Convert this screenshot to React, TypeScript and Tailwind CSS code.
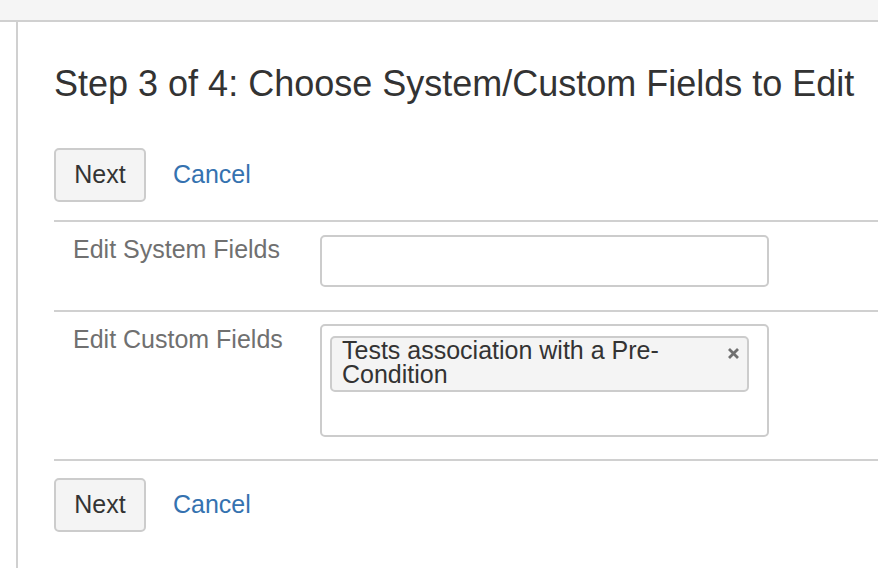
import React from "react";

const NextCancel = () => {
  return (
    <div className="flex items-center">
      <button className="w-[92px] h-[54px] pb-[2px] border-2 border-[#cccccc] rounded-[5px] bg-[#f4f4f4] text-[25px] text-[#333333] leading-none">
        Next
      </button>
      <a href="#" className="ml-[27px] pb-[2px] text-[25px] text-[#3572b0] leading-none">
        Cancel
      </a>
    </div>
  );
};

const App = () => {
  return (
    <div className="w-[878px] h-[568px] overflow-hidden bg-white font-['Liberation_Sans',Arial,Helvetica,sans-serif]">
      <div className="h-[22px] bg-[#f5f5f5] border-b-2 border-[#d0d0d0]" />

      <div className="flex h-[546px]">
        <div className="w-[16px] shrink-0" />
        <div className="flex-1 min-w-0 border-l-2 border-[#d0d0d0] pl-[36px]">
          <h1 className="mt-[40px] text-[36px] leading-[43px] text-[#333333] whitespace-nowrap">
            Step 3 of 4: Choose System/Custom Fields to Edit
          </h1>

          <div className="mt-[43px]">
            <NextCancel />
          </div>

          <div className="mt-[18px] border-t-2 border-[#d0d0d0]">
            <div className="flex">
              <div className="w-[266px] shrink-0 pl-[19px] pt-[12px] text-[25px] leading-[30px] text-[#707070]">
                Edit System Fields
              </div>
              <div className="mt-[13px] mb-[23px] w-[449px] h-[52px] border-2 border-[#cccccc] rounded-[5px] bg-white" />
            </div>
          </div>

          <div className="border-t-2 border-[#d0d0d0]">
            <div className="flex">
              <div className="w-[266px] shrink-0 pl-[19px] pt-[12px] text-[25px] leading-[30px] text-[#707070]">
                Edit Custom Fields
              </div>
              <div className="mt-[12px] mb-[22px] w-[449px] h-[113px] border-2 border-[#cccccc] rounded-[5px] bg-white pl-[8px] pt-[10px]">
                <div className="relative w-[419px] border-2 border-[#cccccc] rounded-[5px] bg-[#f4f4f4] pl-[10px] pr-[30px] pt-0 pb-[4px] text-[25px] leading-[24px] text-[#333333]">
                  Tests association with a Pre-Condition
                  <svg
                    className="absolute right-[7px] top-[9px]"
                    width="13"
                    height="13"
                    viewBox="0 0 13 13"
                  >
                    <path
                      d="M2 2 L11 11 M11 2 L2 11"
                      stroke="#707070"
                      strokeWidth="2.8"
                      strokeLinecap="butt"
                    />
                  </svg>
                </div>
              </div>
            </div>
          </div>

          <div className="border-t-2 border-[#d0d0d0] pt-[17px]">
            <NextCancel />
          </div>
        </div>
      </div>
    </div>
  );
};

export default App;
